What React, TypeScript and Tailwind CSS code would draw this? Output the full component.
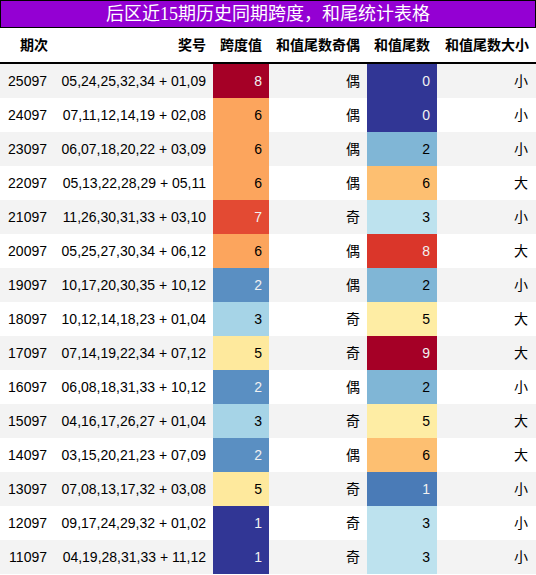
import React from "react";

type Row = [string, string, number, string, number, string];

const rows: Row[] = [
  ["25097", "05,24,25,32,34 + 01,09", 8, "偶", 0, "小"],
  ["24097", "07,11,12,14,19 + 02,08", 6, "偶", 0, "小"],
  ["23097", "06,07,18,20,22 + 03,09", 6, "偶", 2, "小"],
  ["22097", "05,13,22,28,29 + 05,11", 6, "偶", 6, "大"],
  ["21097", "11,26,30,31,33 + 03,10", 7, "奇", 3, "小"],
  ["20097", "05,25,27,30,34 + 06,12", 6, "偶", 8, "大"],
  ["19097", "10,17,20,30,35 + 10,12", 2, "偶", 2, "小"],
  ["18097", "10,12,14,18,23 + 01,04", 3, "奇", 5, "大"],
  ["17097", "07,14,19,22,34 + 07,12", 5, "奇", 9, "大"],
  ["16097", "06,08,18,31,33 + 10,12", 2, "偶", 2, "小"],
  ["15097", "04,16,17,26,27 + 01,04", 3, "奇", 5, "大"],
  ["14097", "03,15,20,21,23 + 07,09", 2, "偶", 6, "大"],
  ["13097", "07,08,13,17,32 + 03,08", 5, "奇", 1, "小"],
  ["12097", "09,17,24,29,32 + 01,02", 1, "奇", 3, "小"],
  ["11097", "04,19,28,31,33 + 11,12", 1, "奇", 3, "小"],
];

const spanCls: Record<number, string> = {
  1: "bg-[#313695] text-[#f1f1f1]",
  2: "bg-[#5a8fc2] text-[#f1f1f1]",
  3: "bg-[#a6d4e7] text-black",
  5: "bg-[#fee99d] text-black",
  6: "bg-[#fca55d] text-black",
  7: "bg-[#e34a33] text-[#f1f1f1]",
  8: "bg-[#a50026] text-[#f1f1f1]",
};

const tailCls: Record<number, string> = {
  0: "bg-[#313695] text-[#f1f1f1]",
  1: "bg-[#4a7bb7] text-[#f1f1f1]",
  2: "bg-[#80b6d6] text-black",
  3: "bg-[#bde2ee] text-black",
  5: "bg-[#feeda4] text-black",
  6: "bg-[#fdbf71] text-black",
  8: "bg-[#da362a] text-[#f1f1f1]",
  9: "bg-[#a50026] text-[#f1f1f1]",
};

const grid = "grid grid-cols-[55px_158px_56px_98px_70px_99px]";

export default function App() {
  return (
    <div
      className="w-[536px] bg-white"
      style={{ fontFamily: '"Liberation Sans", "Noto Sans CJK SC", sans-serif' }}
    >
      <div
        className="h-[28px] border border-black bg-[#9400d3] text-white text-[18px] leading-[26px] text-center"
        style={{ fontFamily: '"Liberation Serif", "Noto Sans CJK SC", serif' }}
      >
        后区近15期历史同期跨度，和尾统计表格
      </div>
      <div className={`${grid} h-[36px] border-b-2 border-black font-bold text-[14px] text-black`}>
        {["期次", "奖号", "跨度值", "和值尾数奇偶", "和值尾数", "和值尾数大小"].map((h) => (
          <div key={h} className="flex items-center justify-end pr-[7px]">
            {h}
          </div>
        ))}
      </div>
      {rows.map((r, i) => (
        <div
          key={r[0]}
          className={`${grid} h-[34px] text-[14px] text-black ${i % 2 === 0 ? "bg-[#f3f3f3]" : "bg-white"}`}
        >
          <div className="flex items-center justify-end pr-[8px]">{r[0]}</div>
          <div className="flex items-center justify-end pr-[7px] whitespace-nowrap">{r[1]}</div>
          <div className={`flex items-center justify-end pr-[7px] ${spanCls[r[2]]}`}>{r[2]}</div>
          <div className="flex items-center justify-end pr-[7px]">{r[3]}</div>
          <div className={`flex items-center justify-end pr-[7px] ${tailCls[r[4]]}`}>{r[4]}</div>
          <div className="flex items-center justify-end pr-[8px]">{r[5]}</div>
        </div>
      ))}
    </div>
  );
}
